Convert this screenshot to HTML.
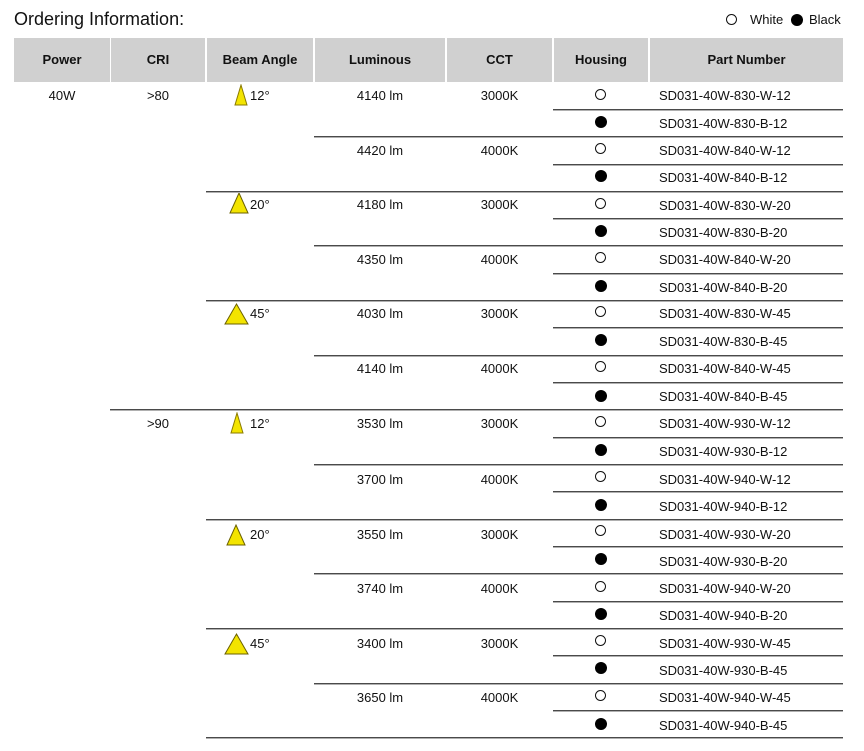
<!DOCTYPE html>
<html><head><meta charset="utf-8"><style>
body{margin:0;width:864px;height:751px;background:#fff;font-family:"Liberation Sans",Arial,sans-serif;color:#111;position:relative;overflow:hidden}
.a{position:absolute}
.h{position:absolute;top:38px;height:44px;background:#d0d0d0;font-weight:bold;font-size:13px;line-height:44px;text-align:center}
.t{position:absolute;font-size:13px;line-height:16px;white-space:nowrap}
.c{text-align:center}
.l{position:absolute;height:1px;background:#4a4a4a;box-shadow:0 1px 0 #b0b0b0;right:21px}
.o{position:absolute;left:595px;width:11px;height:11px;border:1px solid #111;border-radius:50%;box-sizing:border-box}
.f{position:absolute;left:595px;width:12px;height:12px;background:#000;border-radius:50%}
svg{position:absolute}
</style></head><body>
<div class="a" style="left:14px;top:8px;font-size:18px;line-height:22px">Ordering Information:</div>
<div class="a" style="left:726px;top:14px;width:11px;height:11px;border:1px solid #111;border-radius:50%;box-sizing:border-box"></div>
<div class="t" style="left:750px;top:12px">White</div>
<div class="a" style="left:791px;top:14px;width:12px;height:12px;background:#000;border-radius:50%"></div>
<div class="t" style="left:809px;top:12px">Black</div>

<div class="h" style="left:14px;width:96px">Power</div>
<div class="h" style="left:111px;width:94px">CRI</div>
<div class="h" style="left:207px;width:106px">Beam Angle</div>
<div class="h" style="left:315px;width:130px">Luminous</div>
<div class="h" style="left:447px;width:105px">CCT</div>
<div class="h" style="left:554px;width:94px">Housing</div>
<div class="h" style="left:650px;width:193px">Part Number</div>

<div class="t c" style="left:14px;width:96px;top:88px">40W</div>
<div class="t c" style="left:110px;width:96px;top:88px">&gt;80</div>
<div class="t c" style="left:110px;width:96px;top:416px">&gt;90</div>

<!-- beam icons -->
<svg style="left:234px;top:84px" width="15" height="22"><polygon points="7,1 13,21 1,21" fill="#f3e400" stroke="#8a7a00" stroke-width="1"/></svg>
<div class="t" style="left:250px;top:88px">12°</div>
<svg style="left:229px;top:192px" width="21" height="22"><polygon points="10,1 19,21 1,21" fill="#f3e400" stroke="#6a6000" stroke-width="1"/></svg>
<div class="t" style="left:250px;top:197px">20°</div>
<svg style="left:224px;top:303px" width="26" height="22"><polygon points="12.5,1 24,21 1,21" fill="#f3e400" stroke="#6a6000" stroke-width="1"/></svg>
<div class="t" style="left:250px;top:306px">45°</div>
<svg style="left:230px;top:412px" width="15" height="22"><polygon points="7,1 13,21 1,21" fill="#f3e400" stroke="#8a7a00" stroke-width="1"/></svg>
<div class="t" style="left:250px;top:416px">12°</div>
<svg style="left:226px;top:524px" width="21" height="22"><polygon points="10,1 19,21 1,21" fill="#f3e400" stroke="#6a6000" stroke-width="1"/></svg>
<div class="t" style="left:250px;top:527px">20°</div>
<svg style="left:224px;top:633px" width="26" height="22"><polygon points="12.5,1 24,21 1,21" fill="#f3e400" stroke="#6a6000" stroke-width="1"/></svg>
<div class="t" style="left:250px;top:636px">45°</div>

<!-- lum / cct -->
<div class="t c" style="left:314px;width:132px;top:88px">4140 lm</div><div class="t c" style="left:446px;width:107px;top:88px">3000K</div>
<div class="t c" style="left:314px;width:132px;top:143px">4420 lm</div><div class="t c" style="left:446px;width:107px;top:143px">4000K</div>
<div class="t c" style="left:314px;width:132px;top:197px">4180 lm</div><div class="t c" style="left:446px;width:107px;top:197px">3000K</div>
<div class="t c" style="left:314px;width:132px;top:252px">4350 lm</div><div class="t c" style="left:446px;width:107px;top:252px">4000K</div>
<div class="t c" style="left:314px;width:132px;top:306px">4030 lm</div><div class="t c" style="left:446px;width:107px;top:306px">3000K</div>
<div class="t c" style="left:314px;width:132px;top:361px">4140 lm</div><div class="t c" style="left:446px;width:107px;top:361px">4000K</div>
<div class="t c" style="left:314px;width:132px;top:416px">3530 lm</div><div class="t c" style="left:446px;width:107px;top:416px">3000K</div>
<div class="t c" style="left:314px;width:132px;top:472px">3700 lm</div><div class="t c" style="left:446px;width:107px;top:472px">4000K</div>
<div class="t c" style="left:314px;width:132px;top:527px">3550 lm</div><div class="t c" style="left:446px;width:107px;top:527px">3000K</div>
<div class="t c" style="left:314px;width:132px;top:581px">3740 lm</div><div class="t c" style="left:446px;width:107px;top:581px">4000K</div>
<div class="t c" style="left:314px;width:132px;top:636px">3400 lm</div><div class="t c" style="left:446px;width:107px;top:636px">3000K</div>
<div class="t c" style="left:314px;width:132px;top:690px">3650 lm</div><div class="t c" style="left:446px;width:107px;top:690px">4000K</div>

<!-- housing + part numbers -->
<div class="o" style="top:89px"></div><div class="t" style="left:659px;top:88px">SD031-40W-830-W-12</div>
<div class="f" style="top:116px"></div><div class="t" style="left:659px;top:116px">SD031-40W-830-B-12</div>
<div class="o" style="top:143px"></div><div class="t" style="left:659px;top:143px">SD031-40W-840-W-12</div>
<div class="f" style="top:170px"></div><div class="t" style="left:659px;top:170px">SD031-40W-840-B-12</div>
<div class="o" style="top:198px"></div><div class="t" style="left:659px;top:198px">SD031-40W-830-W-20</div>
<div class="f" style="top:225px"></div><div class="t" style="left:659px;top:225px">SD031-40W-830-B-20</div>
<div class="o" style="top:252px"></div><div class="t" style="left:659px;top:252px">SD031-40W-840-W-20</div>
<div class="f" style="top:280px"></div><div class="t" style="left:659px;top:280px">SD031-40W-840-B-20</div>
<div class="o" style="top:306px"></div><div class="t" style="left:659px;top:306px">SD031-40W-830-W-45</div>
<div class="f" style="top:334px"></div><div class="t" style="left:659px;top:334px">SD031-40W-830-B-45</div>
<div class="o" style="top:361px"></div><div class="t" style="left:659px;top:361px">SD031-40W-840-W-45</div>
<div class="f" style="top:390px"></div><div class="t" style="left:659px;top:389px">SD031-40W-840-B-45</div>
<div class="o" style="top:416px"></div><div class="t" style="left:659px;top:416px">SD031-40W-930-W-12</div>
<div class="f" style="top:444px"></div><div class="t" style="left:659px;top:444px">SD031-40W-930-B-12</div>
<div class="o" style="top:471px"></div><div class="t" style="left:659px;top:472px">SD031-40W-940-W-12</div>
<div class="f" style="top:499px"></div><div class="t" style="left:659px;top:499px">SD031-40W-940-B-12</div>
<div class="o" style="top:525px"></div><div class="t" style="left:659px;top:527px">SD031-40W-930-W-20</div>
<div class="f" style="top:553px"></div><div class="t" style="left:659px;top:554px">SD031-40W-930-B-20</div>
<div class="o" style="top:581px"></div><div class="t" style="left:659px;top:581px">SD031-40W-940-W-20</div>
<div class="f" style="top:608px"></div><div class="t" style="left:659px;top:608px">SD031-40W-940-B-20</div>
<div class="o" style="top:635px"></div><div class="t" style="left:659px;top:636px">SD031-40W-930-W-45</div>
<div class="f" style="top:662px"></div><div class="t" style="left:659px;top:663px">SD031-40W-930-B-45</div>
<div class="o" style="top:690px"></div><div class="t" style="left:659px;top:690px">SD031-40W-940-W-45</div>
<div class="f" style="top:718px"></div><div class="t" style="left:659px;top:718px">SD031-40W-940-B-45</div>

<!-- lines -->
<div class="l" style="left:553px;top:109px"></div>
<div class="l" style="left:314px;top:136px"></div>
<div class="l" style="left:553px;top:164px"></div>
<div class="l" style="left:206px;top:191px"></div>
<div class="l" style="left:553px;top:218px"></div>
<div class="l" style="left:314px;top:245px"></div>
<div class="l" style="left:553px;top:273px"></div>
<div class="l" style="left:206px;top:300px"></div>
<div class="l" style="left:553px;top:327px"></div>
<div class="l" style="left:314px;top:355px"></div>
<div class="l" style="left:553px;top:382px"></div>
<div class="l" style="left:110px;top:409px"></div>
<div class="l" style="left:553px;top:437px"></div>
<div class="l" style="left:314px;top:464px"></div>
<div class="l" style="left:553px;top:491px"></div>
<div class="l" style="left:206px;top:519px"></div>
<div class="l" style="left:553px;top:546px"></div>
<div class="l" style="left:314px;top:573px"></div>
<div class="l" style="left:553px;top:601px"></div>
<div class="l" style="left:206px;top:628px"></div>
<div class="l" style="left:553px;top:655px"></div>
<div class="l" style="left:314px;top:683px"></div>
<div class="l" style="left:553px;top:710px"></div>
<div class="l" style="left:206px;top:737px"></div>
</body></html>
